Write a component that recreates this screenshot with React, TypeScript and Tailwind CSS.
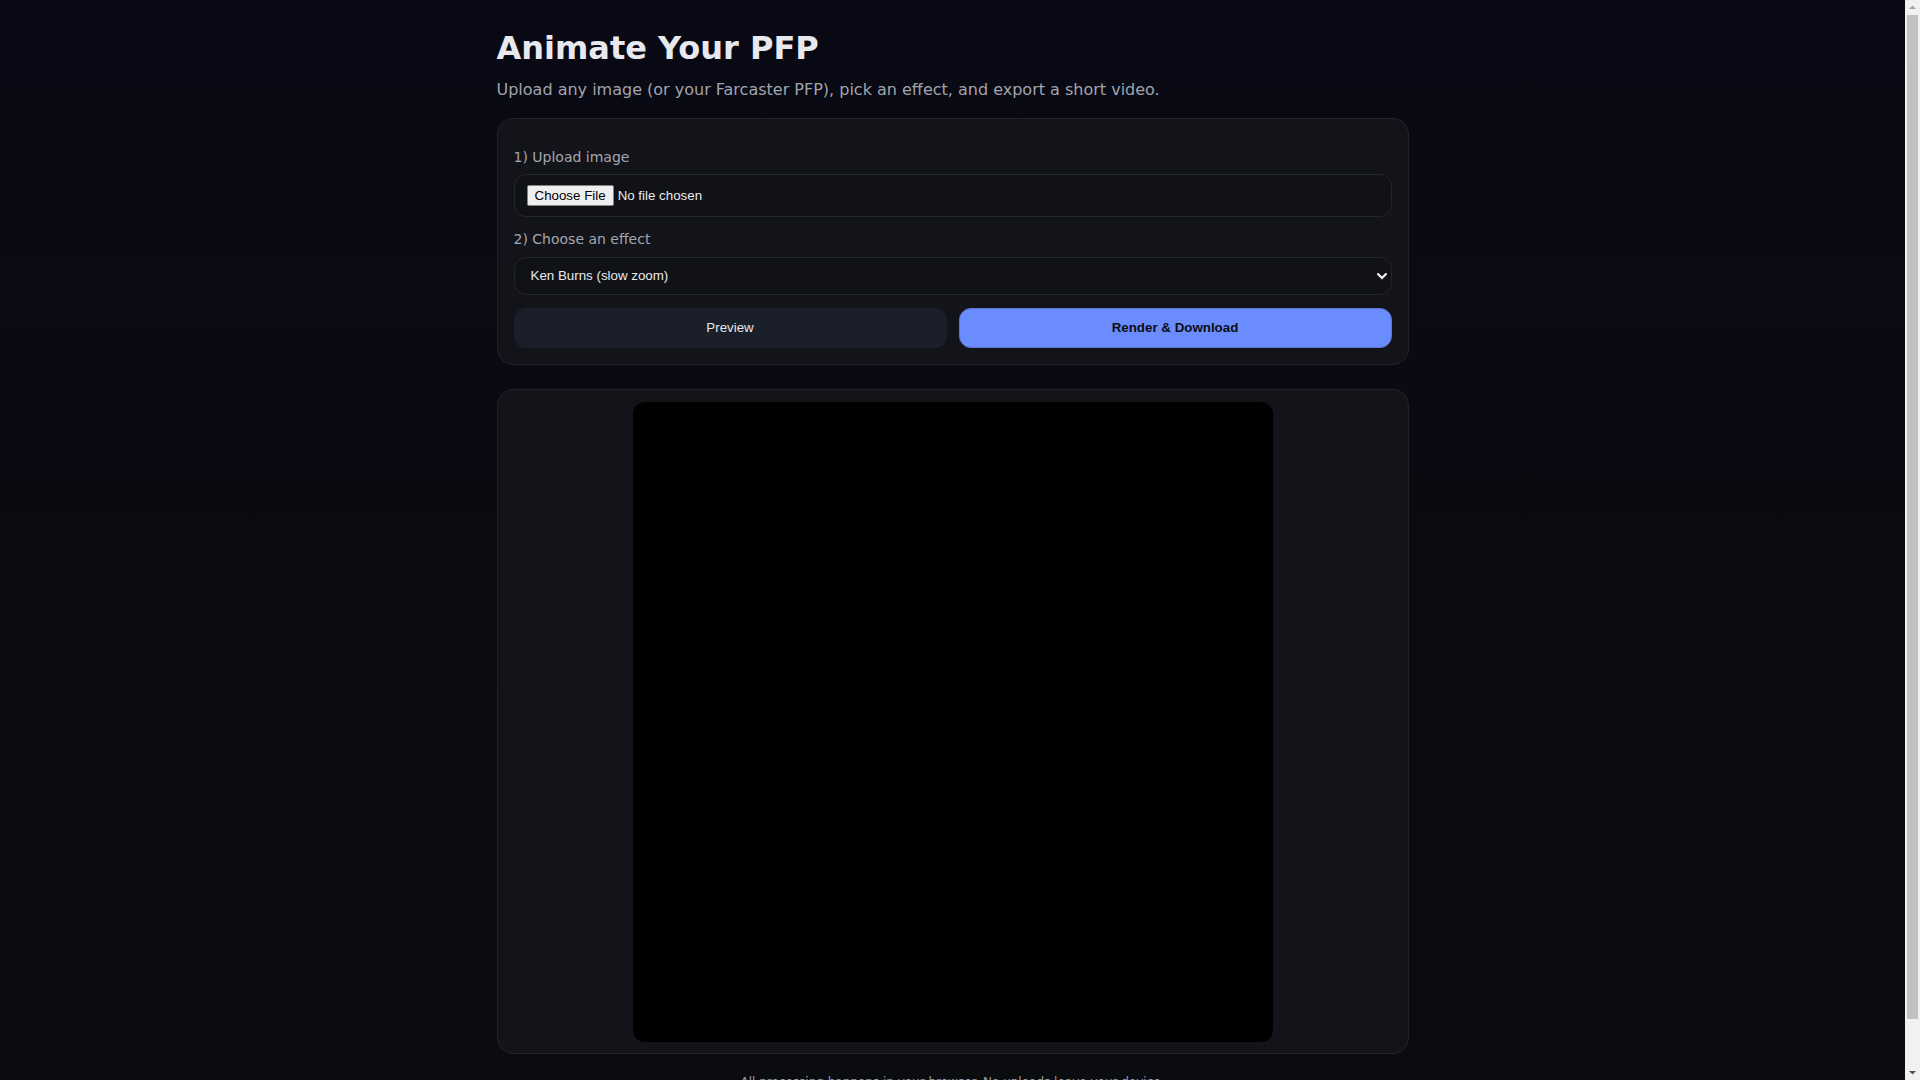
import React from "react";

const effects = ["Ken Burns (slow zoom)", "Pulse", "Spin", "Glitch", "Float"];

function Chevron() {
  return (
    <svg width="10" height="7" viewBox="0 0 10 7" className="shrink-0">
      <path d="M1.2 1.2 L5 5 L8.8 1.2" fill="none" stroke="#f3f4f6" strokeWidth="2.2" strokeLinecap="square" />
    </svg>
  );
}

// classic browser scrollbar, as seen at the right edge of the capture
function ScrollBar() {
  return (
    <div className="fixed top-0 right-0 flex h-screen w-[15px] flex-col items-center bg-[#f1f1f1]">
      <svg width="15" height="15" viewBox="0 0 15 15" className="shrink-0">
        <path d="M4 9 L7.5 5.5 L11 9 Z" fill="#a3a3a3" />
      </svg>
      <div className="w-[11px] flex-1 bg-[#c1c1c1]" />
      <div className="h-[46px] shrink-0" />
      <svg width="15" height="15" viewBox="0 0 15 15" className="shrink-0">
        <path d="M4 6 L7.5 9.5 L11 6 Z" fill="#505050" />
      </svg>
    </div>
  );
}

export default function App() {
  const [effect] = React.useState(effects[0]);

  return (
    <div className="min-h-screen bg-[linear-gradient(180deg,#080914_0%,#0a0b11_45%,#0b0c10_100%)] pr-[15px] font-['DejaVu_Sans',sans-serif] text-[#e5e7eb]">
      <div className="mx-auto max-w-[960px] px-6 pt-[29px] pb-6">
        {/* Header */}
        <h1 className="text-[32px] leading-[38px] font-bold text-[#e8e9ee]">Animate Your PFP</h1>
        <p className="mt-[11px] text-base leading-6 text-[#a1a4ad]">
          Upload any image (or your Farcaster PFP), pick an effect, and export a short video.
        </p>

        {/* Controls card */}
        <div className="mt-[16px] rounded-2xl border border-[#212329] bg-[#131419] px-4 pt-[28px] pb-4">
          <div className="text-sm leading-5 text-[#a3a6af]">1) Upload image</div>
          <div className="mt-[7px] flex h-[43px] items-center rounded-xl border border-[#24262d] bg-[#111216] px-3">
            <span className="flex h-[21px] items-center rounded-[2px] border border-[#858585] bg-[#efefef] px-[7px] font-['Liberation_Sans',Arial,sans-serif] text-[13.333px] text-black">
              Choose File
            </span>
            <span className="ml-[4px] font-['Liberation_Sans',Arial,sans-serif] text-[13.333px] text-[#e8e9ee]">
              No file chosen
            </span>
          </div>

          <div className="mt-3 text-sm leading-5 text-[#a3a6af]">2) Choose an effect</div>
          <div className="mt-2 flex h-[38px] items-center justify-between rounded-xl border border-[#24262d] bg-[#111216] pl-4 pr-[4px]">
            <span className="font-['Liberation_Sans',Arial,sans-serif] text-[13.333px] text-[#e8e9ee]">{effect}</span>
            <Chevron />
          </div>

          <div className="mt-[13px] grid grid-cols-2 gap-3">
            <button className="h-10 rounded-xl bg-[#1b1f29] font-['Liberation_Sans',Arial,sans-serif] text-[13.333px] text-[#e5e7eb]">
              Preview
            </button>
            <button className="h-10 rounded-xl border border-[#5a76d6] bg-[#6b8cff] font-['Liberation_Sans',Arial,sans-serif] text-[13.333px] font-bold text-[#0b0c12]">
              Render &amp; Download
            </button>
          </div>
        </div>

        {/* Stage */}
        <div className="mt-6 flex justify-center rounded-2xl border border-[#212329] bg-[#131419] px-3 pt-3 pb-[11px]">
          <div className="h-[640px] w-[640px] rounded-xl bg-black" />
        </div>

        <p className="mt-5 text-center text-xs leading-4 text-[#9a9da6]">
          All processing happens in your browser. No uploads leave your device.
        </p>
      </div>
      <ScrollBar />
    </div>
  );
}
